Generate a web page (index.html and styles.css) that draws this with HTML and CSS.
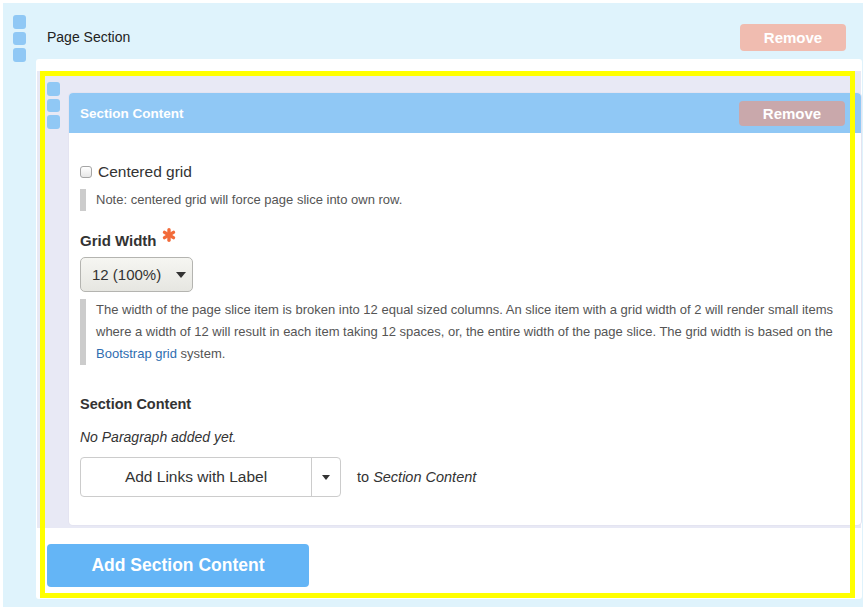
FILE: index.html
```html
<!DOCTYPE html>
<html lang="en">
<head>
<meta charset="utf-8">
<title>Page Section</title>
<link rel="stylesheet" href="styles.css">
</head>
<body>
<div class="page-section">
  <div class="handle ps-handle"><span></span><span></span><span></span></div>
  <div class="ps-main">
    <div class="ps-head">
      <span class="ps-title">Page Section</span>
      <button class="btn-remove">Remove</button>
    </div>
    <div class="panel">
      <div class="item">
        <div class="handle item-handle"><span></span><span></span><span></span></div>
        <div class="card">
          <div class="card-head">
            <span class="card-title">Section Content</span>
            <button class="btn-remove btn-remove-dark">Remove</button>
          </div>
          <div class="card-body">
            <label class="check-row"><input type="checkbox" class="check"> Centered grid</label>
            <div class="note">Note: centered grid will force page slice into own row.</div>
            <div class="field-label">Grid Width <svg class="req" width="14" height="14" viewBox="0 0 14 14"><g stroke="#f26b3a" stroke-width="3.4" stroke-linecap="round"><line x1="7" y1="1.8" x2="7" y2="12.2"/><line x1="2.5" y1="4.4" x2="11.5" y2="9.6"/><line x1="2.5" y1="9.6" x2="11.5" y2="4.4"/></g></svg></div>
            <div class="select"><span>12 (100%)</span><i class="select-caret"></i></div>
            <div class="note desc">The width of the page slice item is broken into 12 equal sized columns. An slice item with a grid width of 2 will render small items where a width of 12 will result in each item taking 12 spaces, or, the entire width of the page slice. The grid width is based on the <a href="#" class="link">Bootstrap grid</a> system.</div>
            <div class="field-label sub-label">Section Content</div>
            <div class="empty">No Paragraph added yet.</div>
            <div class="add-row">
              <div class="split">
                <span class="split-main">Add Links with Label</span>
                <span class="split-toggle"><i class="dd-caret"></i></span>
              </div>
              <span class="add-to">to <em>Section Content</em></span>
            </div>
          </div>
        </div>
      </div>
      <div class="panel-foot">
        <button class="btn-add">Add Section Content</button>
      </div>
      <div class="highlight"></div>
    </div>
  </div>
</div>
</body>
</html>
```
FILE: styles.css
```css
* { box-sizing: border-box; }
html, body { margin: 0; background: #fff; }
body {
  font-family: "Liberation Sans", Arial, Helvetica, sans-serif;
  color: #333;
}
.page-section {
  margin: 3px 5px 0 3px;
  height: 604px;
  background: #dff3fc;
  display: flex;
  padding-left: 10px;
}
.handle { display: flex; flex-direction: column; gap: 3px; width: 13px; flex: none; }
.handle span { display: block; width: 13px; height: 13.5px; border-radius: 3px; background: #90c8f5; }
.ps-handle { margin-top: 12px; margin-right: 10px; }
.ps-main { flex: 1; padding-right: 1px; }
.ps-head {
  height: 56px;
  padding: 12px 16px 0 11px;
  display: flex;
  align-items: center;
  justify-content: space-between;
}
.ps-title { font-size: 14px; color: #222; }
.btn-remove {
  width: 106px;
  height: 27px;
  border: 0;
  border-radius: 4px;
  background: #f0bcb0;
  color: #fff;
  font-family: inherit;
  font-weight: bold;
  font-size: 15px;
  padding: 0;
}
.btn-remove-dark { height: 25px; background: #c9a8ab; }
.panel {
  position: relative;
  background: #fff;
  border-radius: 3px;
  padding: 12px 1px 12px 1px;
  height: 540px;
}
.item {
  background: #e8e9f5;
  display: flex;
  align-items: flex-start;
  padding-bottom: 3px;
}
.item-handle { margin: 11px 9px 0 10px; }
.card {
  flex: 1;
  margin-top: 22px;
  background: #fff;
  border-radius: 4px;
  box-shadow: 0 0 0 1px #e4e4f1;
}
.card-head {
  height: 40px;
  background: #90c8f5;
  border-radius: 4px 4px 0 0;
  display: flex;
  align-items: center;
  justify-content: space-between;
  padding: 0 16px 0 11px;
}
.card-title { color: #fff; font-weight: bold; font-size: 13.5px; }
.card-body { padding: 29px 16px 28px 11px; }
.check-row {
  display: flex;
  align-items: center;
  height: 20px;
  font-size: 15.5px;
  color: #333;
}
.check {
  -webkit-appearance: none;
  appearance: none;
  width: 12px;
  height: 12px;
  margin: 0 6px 0 0;
  border: 1px solid #a5a5a5;
  border-radius: 3px;
  background: linear-gradient(#fff, #e6e6e6);
}
.note {
  margin-top: 7px;
  border-left: 6px solid #cccccc;
  padding-left: 10px;
  line-height: 22px;
  font-size: 13px;
  color: #555;
}
.field-label {
  margin-top: 20px;
  height: 20px;
  line-height: 20px;
  font-weight: bold;
  font-size: 15px;
  color: #333;
  display: flex;
  align-items: center;
}
.req { margin: -12px 0 0 5px; }
.select {
  margin-top: 6px;
  width: 113px;
  height: 35px;
  border: 1px solid #b4b4b0;
  border-radius: 5px;
  background: linear-gradient(#f6f6f2, #e6e6e1);
  display: flex;
  align-items: center;
  justify-content: space-between;
  padding: 0 6px 0 11px;
  font-size: 15px;
  color: #333;
}
.select-caret {
  width: 0; height: 0;
  border-left: 5px solid transparent;
  border-right: 5px solid transparent;
  border-top: 6px solid #333;
}
.desc { margin-top: 7px; }
.link { color: #2f6db0; text-decoration: none; }
.sub-label { margin-top: 29px; font-size: 14.5px; }
.empty {
  margin-top: 13px;
  line-height: 20px;
  font-size: 14px;
  font-style: italic;
  color: #333;
}
.add-row { margin-top: 10px; display: flex; align-items: center; }
.split {
  display: flex;
  height: 40px;
  border: 1px solid #cccccc;
  border-radius: 4px;
}
.split-main {
  width: 231px;
  display: flex;
  align-items: center;
  justify-content: center;
  font-size: 15.5px;
  color: #333;
  border-right: 1px solid #cccccc;
}
.split-toggle { width: 28px; display: flex; align-items: center; justify-content: center; }
.dd-caret {
  width: 0; height: 0;
  border-left: 4.5px solid transparent;
  border-right: 4.5px solid transparent;
  border-top: 5px solid #333;
}
.add-to { margin-left: 16px; font-size: 14.5px; color: #333; }
.panel-foot { padding: 16px 0 0 10px; }
.btn-add {
  width: 262px;
  height: 43px;
  border: 0;
  border-radius: 4px;
  background: #64b5f6;
  color: #fff;
  font-family: inherit;
  font-weight: bold;
  font-size: 17.5px;
  padding: 0;
}
.highlight {
  position: absolute;
  left: 4px;
  top: 12px;
  width: 815px;
  height: 527px;
  border: 5px solid #ffff00;
  pointer-events: none;
}
```
